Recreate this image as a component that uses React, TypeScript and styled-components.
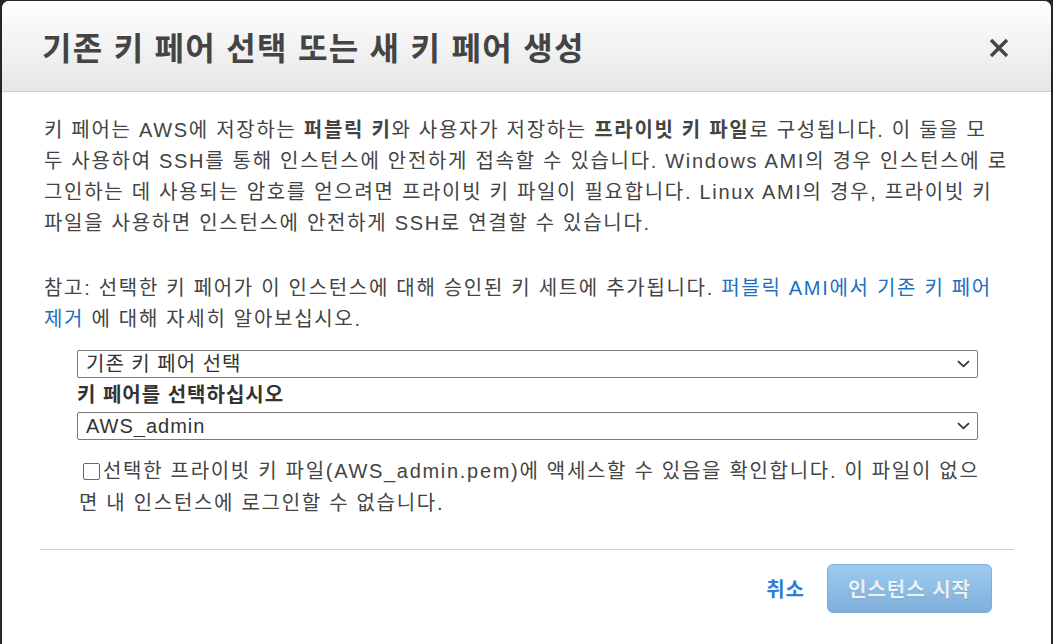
import React from "react";
import styled, { createGlobalStyle } from "styled-components";

const Global = createGlobalStyle`
  html, body { margin: 0; padding: 0; }
  body {
    background: #262626;
    font-family: "Liberation Sans", "Noto Sans CJK KR", Arial, sans-serif;
    overflow: hidden;
  }
`;

const Overlay = styled.div`
  padding: 1px 2px 0 2px;
  height: 644px;
  box-sizing: border-box;
`;

const Modal = styled.div`
  background: #ffffff;
  border-radius: 7px 7px 0 0;
  height: 100%;
  overflow: hidden;
`;

const Header = styled.div`
  height: 90px;
  display: flex;
  align-items: center;
  justify-content: space-between;
  padding: 0 40px 0 40px;
  background: linear-gradient(#ffffff, #e6e6e6);
  border-bottom: 1px solid #cdcdcd;
`;

const Title = styled.h1`
  margin: 0;
  font-size: 32px;
  font-weight: 700;
  color: #444444;
  letter-spacing: 1.3px;
  font-family: "Liberation Sans", "Noto Sans CJK KR", sans-serif;
`;

const Close = styled.button`
  border: 0;
  background: transparent;
  padding: 0;
  width: 24px;
  height: 24px;
  display: flex;
  align-items: center;
  justify-content: center;
  cursor: pointer;
  margin-top: 4px;
`;

const Body = styled.div`
  padding: 23px 37px 0 38px;
`;

const Para = styled.p<{ $gap?: number }>`
  margin: 0 0 ${(p) => p.$gap ?? 0}px 4px;
  font-size: 20px;
  line-height: 31px;
  color: #444444;
  white-space: nowrap;
  letter-spacing: 1.7px;
`;

const Link = styled.a`
  color: #1d6fc4;
  text-decoration: none;
`;

const Form = styled.div`
  margin: 0 36px 0 37px;
`;

const SelectWrap = styled.div`
  position: relative;
  height: 28px;
`;

const Select = styled.select`
  appearance: none;
  -webkit-appearance: none;
  width: 100%;
  height: 28px;
  box-sizing: border-box;
  border: 1px solid #7a7a7a;
  border-radius: 2px;
  background: #ffffff;
  padding: 0 30px 0 8px;
  font-family: "Liberation Sans", "Noto Sans CJK KR", sans-serif;
  font-size: 20px;
  letter-spacing: 1px;
  color: #333333;
  outline: none;
`;

const Chevron = styled.svg`
  position: absolute;
  right: 8px;
  top: 10px;
  pointer-events: none;
`;

const Label = styled.div`
  font-size: 20px;
  font-weight: 700;
  color: #333333;
  height: 34px;
  line-height: 34px;
  letter-spacing: 1px;
`;

const CheckRow = styled.div`
  margin: 15px 0 0 2px;
  font-size: 20px;
  line-height: 32px;
  color: #444444;
  white-space: nowrap;
  letter-spacing: 1.7px;
`;

const Box = styled.span`
  display: inline-block;
  width: 17px;
  height: 17px;
  box-sizing: border-box;
  border: 1px solid #666666;
  border-radius: 2px;
  vertical-align: -2px;
  margin: 0 3px 0 4px;
  background: #fff;
`;

const Divider = styled.hr`
  border: 0;
  border-top: 1px solid #cccccc;
  margin: 30px 0 0 0;
`;

const Footer = styled.div`
  display: flex;
  justify-content: flex-end;
  align-items: center;
  gap: 22px;
  padding: 14px 22px 0 0;
`;

const Cancel = styled.button`
  border: 0;
  background: transparent;
  color: #2f80d5;
  font-family: "Liberation Sans", "Noto Sans CJK KR", sans-serif;
  font-size: 20px;
  font-weight: 700;
  letter-spacing: 1px;
  padding: 0;
  cursor: pointer;
`;

const Primary = styled.button`
  width: 165px;
  height: 49px;
  border: 1px solid #80aed6;
  border-radius: 6px;
  background: linear-gradient(#9dcbef, #7fb0dc);
  color: rgba(255, 255, 255, 0.85);
  font-family: "Liberation Sans", "Noto Sans CJK KR", sans-serif;
  font-size: 20px;
  font-weight: 700;
  letter-spacing: 1px;
  text-shadow: 0 1px 1px rgba(0, 0, 0, 0.15);
  cursor: default;
`;

const ChevronIcon = () => (
  <Chevron width="13" height="8" viewBox="0 0 13 8">
    <path d="M1 1.2 L6.5 6.3 L12 1.2" fill="none" stroke="#333" strokeWidth="1.8" />
  </Chevron>
);

export default function App() {
  return (
    <>
      <Global />
      <Overlay>
        <Modal>
          <Header>
            <Title>기존 키 페어 선택 또는 새 키 페어 생성</Title>
            <Close aria-label="닫기">
              <svg width="22" height="22" viewBox="0 0 22 22">
                <path d="M3 3 L19 19 M19 3 L3 19" stroke="#444" strokeWidth="3.4" strokeLinecap="butt" />
              </svg>
            </Close>
          </Header>
          <Body>
            <Para $gap={34}>
              키 페어는 AWS에 저장하는 <b>퍼블릭 키</b>와 사용자가 저장하는 <b>프라이빗 키 파일</b>로 구성됩니다. 이 둘을 모
              <br />
              두 사용하여 SSH를 통해 인스턴스에 안전하게 접속할 수 있습니다. Windows AMI의 경우 인스턴스에 로
              <br />
              그인하는 데 사용되는 암호를 얻으려면 프라이빗 키 파일이 필요합니다. Linux AMI의 경우, 프라이빗 키
              <br />
              파일을 사용하면 인스턴스에 안전하게 SSH로 연결할 수 있습니다.
            </Para>
            <Para $gap={15}>
              참고: 선택한 키 페어가 이 인스턴스에 대해 승인된 키 세트에 추가됩니다. <Link href="#">퍼블릭 AMI에서 기존 키 페어
              <br />
              제거</Link> 에 대해 자세히 알아보십시오.
            </Para>
            <Form>
              <SelectWrap>
                <Select defaultValue="existing">
                  <option value="existing">기존 키 페어 선택</option>
                  <option value="new">새 키 페어 생성</option>
                </Select>
                <ChevronIcon />
              </SelectWrap>
              <Label>키 페어를 선택하십시오</Label>
              <SelectWrap>
                <Select defaultValue="AWS_admin">
                  <option value="AWS_admin">AWS_admin</option>
                </Select>
                <ChevronIcon />
              </SelectWrap>
              <CheckRow>
                <Box />선택한 프라이빗 키 파일(AWS_admin.pem)에 액세스할 수 있음을 확인합니다. 이 파일이 없으
                <br />
                면 내 인스턴스에 로그인할 수 없습니다.
              </CheckRow>
            </Form>
            <Divider />
            <Footer>
              <Cancel>취소</Cancel>
              <Primary>인스턴스 시작</Primary>
            </Footer>
          </Body>
        </Modal>
      </Overlay>
    </>
  );
}
